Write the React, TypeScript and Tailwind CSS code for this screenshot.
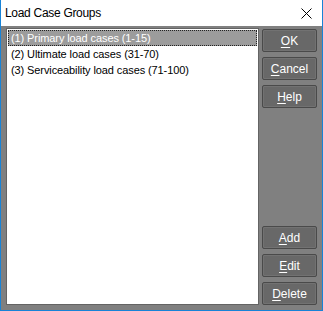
import React from "react";

const font = { fontFamily: '"Liberation Sans", Arial, sans-serif' };

function Btn({ pre, u, post }: { pre?: string; u: string; post: string }) {
  return (
    <button
      className="h-[23px] w-[55px] rounded-[2px] border border-[#4a4a4a] bg-[#686868] text-[12px] leading-none text-white shadow-[inset_0_0_0_1px_#727272]"
      style={font}
    >
      {pre}
      <span className="underline underline-offset-[2px]">{u}</span>
      {post}
    </button>
  );
}

export default function App() {
  const items = [
    "(1) Primary load cases (1-15)",
    "(2) Ultimate load cases (31-70)",
    "(3) Serviceability load cases (71-100)",
  ];
  return (
    <div
      className="flex h-[311px] w-[323px] flex-col border-x border-b border-[#1883d7] bg-white"
      style={font}
    >
      <div className="flex h-[26px] items-center justify-between pl-[4px] pr-[10px]">
        <span className="text-[12px] tracking-[-0.3px] text-black">Load Case Groups</span>
        <svg width="11" height="11" viewBox="0 0 11 11">
          <path d="M0.5 0.5 L10.5 10.5 M10.5 0.5 L0.5 10.5" stroke="#000" strokeWidth="1" />
        </svg>
      </div>
      <div className="flex flex-1 gap-[3px] bg-[#808080] pb-[5px] pl-[5px] pr-[4px] pt-[2px]">
        <div className="flex w-[253px] flex-col border border-[#646464] bg-white p-[1px]">
          {items.map((t, i) => (
            <div
              key={t}
              className={
                "flex h-[16px] items-center px-[2px] text-[11px] tracking-[-0.1px] " +
                (i === 0
                  ? "border border-dotted border-[#222] bg-[#9c9c9c] text-white"
                  : "border border-transparent text-black")
              }
            >
              {t}
            </div>
          ))}
        </div>
        <div className="flex flex-1 flex-col gap-[5px] pt-[1px]">
          <Btn u="O" post="K" />
          <Btn u="C" post="ancel" />
          <Btn u="H" post="elp" />
          <div className="flex-1" />
          <Btn u="A" post="dd" />
          <Btn u="E" post="dit" />
          <Btn u="D" post="elete" />
        </div>
      </div>
    </div>
  );
}
